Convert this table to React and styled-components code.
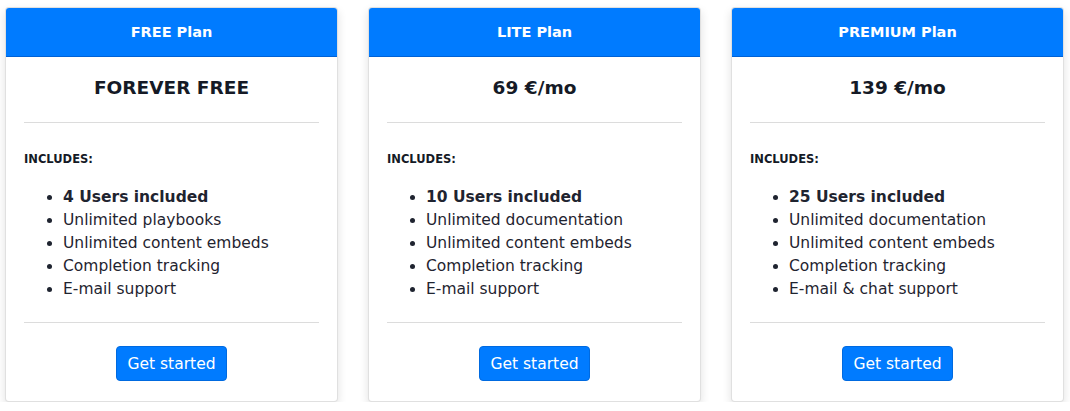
import React from "react";
import styled, { createGlobalStyle } from "styled-components";

const plans = [
  {
    name: "FREE Plan",
    price: "FOREVER FREE",
    users: "4 Users included",
    items: ["Unlimited playbooks", "Unlimited content embeds", "Completion tracking", "E-mail support"],
  },
  {
    name: "LITE Plan",
    price: "69 €/mo",
    users: "10 Users included",
    items: ["Unlimited documentation", "Unlimited content embeds", "Completion tracking", "E-mail support"],
  },
  {
    name: "PREMIUM Plan",
    price: "139 €/mo",
    users: "25 Users included",
    items: ["Unlimited documentation", "Unlimited content embeds", "Completion tracking", "E-mail & chat support"],
  },
];

function App() {
  return (
    <>
      <GlobalStyle />
      <Row>
        {plans.map((plan) => (
          <Card key={plan.name}>
            <Header>{plan.name}</Header>
            <Body>
              <Price>{plan.price}</Price>
              <Divider />
              <Includes>INCLUDES:</Includes>
              <List>
                <Item bold>{plan.users}</Item>
                {plan.items.map((item) => (
                  <Item key={item}>{item}</Item>
                ))}
              </List>
              <Divider />
              <Footer>
                <Button>Get started</Button>
              </Footer>
            </Body>
          </Card>
        ))}
      </Row>
    </>
  );
}

export default App;

const GlobalStyle = createGlobalStyle`
  body {
    margin: 0;
    background: #ffffff;
    font-family: "DejaVu Sans", "Noto Sans", sans-serif;
    color: #212529;
  }
`;

const Row = styled.div`
  display: grid;
  grid-template-columns: repeat(3, 333px);
  column-gap: 30px;
  padding: 7px 0 0 5px;
`;

const Card = styled.div`
  background: #fff;
  border: 1px solid rgba(0, 0, 0, 0.12);
  border-radius: 4px;
  box-shadow: 0 4px 10px rgba(0, 0, 0, 0.12);
  height: 395px;
  box-sizing: border-box;
  overflow: hidden;
  display: flex;
  flex-direction: column;
`;

const Header = styled.div`
  background: #007bff;
  border-bottom: 1px solid #0062d6;
  color: #fff;
  font-weight: bold;
  font-size: 14.5px;
  height: 48px;
  display: flex;
  align-items: center;
  justify-content: center;
`;

const Body = styled.div`
  padding: 0 18px;
  display: flex;
  flex-direction: column;
`;

const Price = styled.div`
  font-size: 18.5px;
  font-weight: bold;
  color: #151a26;
  text-align: center;
  height: 62px;
  line-height: 62px;
  padding-bottom: 3px;
`;

const Divider = styled.hr`
  border: 0;
  border-top: 1px solid #dcdcdc;
  margin: 0;
`;

const Includes = styled.div`
  font-size: 11.5px;
  font-weight: bold;
  color: #151a26;
  margin-top: 28px;
  line-height: 16px;
`;

const List = styled.ul`
  margin: 19px 0 21px;
  padding-left: 39px;
  list-style: disc;
`;

const Item = styled.li`
  font-size: 15.5px;
  line-height: 23px;
  color: #1f2430;
  font-weight: ${(p) => (p.bold ? "bold" : "normal")};
`;

const Footer = styled.div`
  display: flex;
  justify-content: center;
  padding-top: 23px;
`;

const Button = styled.button`
  background: #007bff;
  color: #fff;
  border: 1px solid #006ae0;
  border-radius: 4px;
  font-family: inherit;
  font-size: 15.5px;
  width: 111px;
  height: 35px;
  padding: 0;
`;
